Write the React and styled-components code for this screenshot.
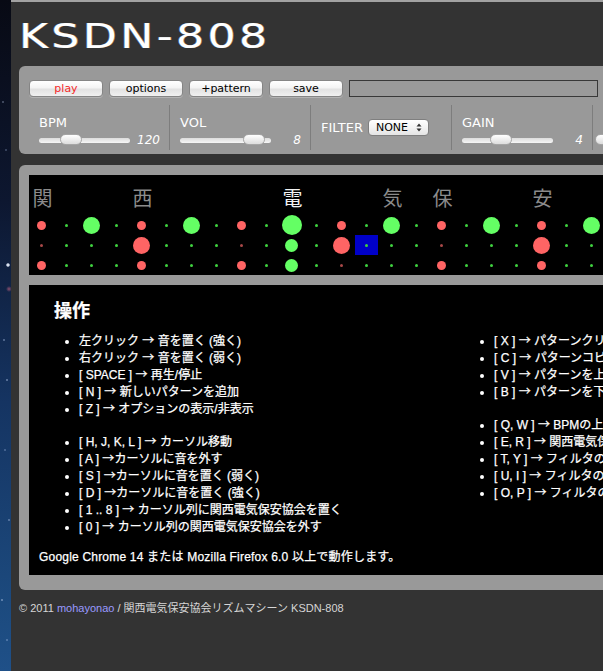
import React from 'react';
import styled, { createGlobalStyle } from 'styled-components';

const GlobalStyle = createGlobalStyle`
  html, body {
    margin: 0;
    padding: 0;
    background: #333;
    overflow: hidden;
  }
  body {
    width: 603px;
    height: 671px;
  }
`;

const Screen = styled.div`
  display: flex;
  width: 603px;
  height: 671px;
  overflow: hidden;
`;

// desktop wallpaper peeking out on the left of the browser window
const Desktop = styled.div`
  flex: 0 0 11px;
  background:
    radial-gradient(circle at 8px 265px, #e8eef8 0, #cfd8e8 1.2px, transparent 2.2px),
    radial-gradient(circle at 9px 289px, rgba(170, 90, 120, 0.8) 0, transparent 3px),
    radial-gradient(circle at 3px 102px, #8894b0 0, transparent 1.2px),
    radial-gradient(circle at 6px 150px, #6f7ea0 0, transparent 1.2px),
    radial-gradient(circle at 4px 340px, #8fa6cc 0, transparent 1.3px),
    radial-gradient(circle at 7px 380px, #a0b4d8 0, transparent 1.3px),
    radial-gradient(circle at 5px 450px, #7f98c4 0, transparent 1.2px),
    radial-gradient(circle at 9px 520px, #9cb2d8 0, transparent 1.2px),
    radial-gradient(circle at 2px 600px, #a6bde0 0, transparent 1.3px),
    radial-gradient(circle at 7px 640px, #8ca8d4 0, transparent 1.2px),
    linear-gradient(180deg, #080a14 0%, #0d1730 30%, #153462 60%, #1c4a7e 90%, #1f5088 100%);
`;

const Window = styled.div`
  flex: 1;
  min-width: 0;
  background: #333;
  border-top: 2px solid #a2a2a2;
  overflow: hidden;
`;

const Page = styled.div`
  width: 960px;
  padding-left: 8px;
`;

const Title = styled.h1`
  margin: 14px 0 10px;
  height: 40px;
  font-family: "DejaVu Sans", sans-serif;
  font-size: 34px;
  font-weight: normal;
  line-height: 40px;
  color: #fff;

  span {
    display: inline-block;
    letter-spacing: 2.6px;
    transform: scaleX(1.3);
    transform-origin: left center;
    text-shadow: -0.6px 0 rgba(120, 180, 255, 0.55), 0.6px 0 rgba(255, 190, 110, 0.55);
  }
`;

const Panel = styled.div`
  background: #999;
  border-radius: 6px;
  padding: ${p => p.$pad};
  margin-top: ${p => p.$gap || 0}px;
`;

const ButtonRow = styled.div`
  display: flex;
  align-items: center;
  gap: 6px;
`;

const Button = styled.button`
  width: 74px;
  height: 17px;
  padding: 0;
  border: 1px solid #858585;
  border-radius: 4px;
  background: linear-gradient(180deg, #ffffff 0%, #f4f4f4 45%, #e2e2e2 55%, #f0f0f0 100%);
  box-shadow: 0 1px 0 rgba(255, 255, 255, 0.25);
  font-family: "DejaVu Sans", sans-serif;
  font-size: 11px;
  line-height: 15px;
  color: ${p => (p.$accent ? '#f52a2a' : '#000')};
`;

const PatternField = styled.div`
  width: 249px;
  height: 17px;
  box-sizing: border-box;
  border: 1px solid #383838;
  background: #9a9a9a;
`;

const SectionRow = styled.div`
  display: flex;
  margin-top: 8px;
  height: 45px;
`;

const Section = styled.div`
  box-sizing: border-box;
  width: 140px;
  padding: 10px 9px 0 10px;
  font-family: "DejaVu Sans", sans-serif;
  color: #fff;

  & + & {
    width: 141px;
    border-left: 1px solid #7d7d7d;
  }
`;

const InlineSection = styled(Section)`
  display: flex;
  align-items: center;
  padding-top: 0;
`;

const Label = styled.div`
  font-size: 13px;
  line-height: 15px;
  height: 15px;
`;

const InlineLabel = styled(Label)`
  margin-right: 5px;
`;

const SliderRow = styled.div`
  display: flex;
  align-items: center;
  height: 16px;
  margin-top: 2px;
`;

const Track = styled.div`
  position: relative;
  flex: 0 0 91px;
  height: 5px;
  border-radius: 3px;
  background: linear-gradient(180deg, #dcdcdc, #f6f6f6);
`;

const Knob = styled.div`
  position: absolute;
  top: -4px;
  width: 22px;
  height: 11px;
  box-sizing: border-box;
  border: 1px solid #a6a6a6;
  border-radius: 6px;
  background: linear-gradient(180deg, #ffffff 0%, #eeeeee 50%, #dddddd 100%);
`;

const Value = styled.div`
  flex: 1;
  text-align: right;
  font-size: 12px;
  font-style: italic;
  line-height: 16px;
`;

const Select = styled.div`
  display: flex;
  align-items: center;
  width: 61px;
  height: 17px;
  box-sizing: border-box;
  padding: 0 6px 0 7px;
  border: 1px solid #7f7f7f;
  border-radius: 4px;
  background: linear-gradient(180deg, #ffffff 0%, #f3f3f3 50%, #e4e4e4 100%);
  color: #000;
  font-size: 11px;

  span { flex: 1; }
`;

const SelectArrows = () => (
  <svg width="6" height="9" viewBox="0 0 6 9">
    <path d="M3 0.5 L5.5 3.5 H0.5 Z M3 8.5 L5.5 5.5 H0.5 Z" fill="#333" />
  </svg>
);

const Slider = ({ label, value, knob }) => (
  <Section>
    <Label>{label}</Label>
    <SliderRow>
      <Track>
        <Knob style={{ left: knob }} />
      </Track>
      <Value>{value}</Value>
    </SliderRow>
  </Section>
);

const Sequencer = styled.div`
  background: #000;
  height: 100px;
  box-sizing: border-box;
  padding-top: 12px;
`;

const CharRow = styled.div`
  display: flex;
  height: 20px;
  margin-bottom: 8px;
`;

const Char = styled.div`
  flex: 0 0 25px;
  padding-left: 2px;
  box-sizing: border-box;
  text-align: center;
  font-family: "Noto Sans CJK JP", sans-serif;
  font-size: 20px;
  line-height: 21px;
  color: ${p => (p.$lit ? '#f2f2f2' : '#8b8b8b')};
`;

const DotRow = styled.div`
  display: flex;
  height: 20px;
`;

const Cell = styled.div`
  position: relative;
  flex: 0 0 25px;
  display: flex;
  align-items: center;
  justify-content: center;
`;

const Cursor = styled.div`
  position: absolute;
  left: 1px;
  top: 0;
  width: 23px;
  height: 20px;
  background: #0000c8;
`;

const Dot = styled.span`
  position: relative;
  width: ${p => p.$size}px;
  height: ${p => p.$size}px;
  border-radius: 50%;
  background: ${p => p.$color};
`;

const RED = '#ff6464';
const GREEN = '#64ff64';

const DOTS = {
  s: { size: 3, color: '#3fd23f' },
  r: { size: 3, color: '#a84848' },
  R: { size: 9, color: RED },
  B: { size: 17, color: RED },
  G: { size: 17, color: GREEN },
  g: { size: 13, color: GREEN },
  H: { size: 20, color: GREEN },
};

const ROWS = [
  'RsGsRsGsRsHsRsGsRsGsRsG',
  'rsssBsssrsgsBsssrsssBss',
  'RsssRsssRsgsrsssRsssRss',
];

const CHARS = { 0: '関', 4: '西', 10: '電', 14: '気', 16: '保', 20: '安' };

const CURSOR = { row: 1, col: 13 };

const Manual = styled.div`
  background: #000;
  box-sizing: border-box;
  height: 290px;
  margin-top: 10px;
  padding: 12px 10px 0;
  color: #fff;
  font-family: "Liberation Sans", "Noto Sans CJK JP", sans-serif;
  font-size: 12px;
  line-height: 17px;
  -webkit-text-stroke: 0.25px #fff;
`;

const Heading = styled.h2`
  margin: 0 0 12px 15px;
  font-family: "Noto Sans CJK JP", sans-serif;
  font-size: 18px;
  font-weight: bold;
  line-height: 24px;
`;

const Columns = styled.div`
  display: grid;
  grid-template-columns: 415px 415px;
`;

const KeyList = styled.ul`
  margin: 0;
  padding-left: 40px;

  & + & { margin-top: 16px; }

  li {
    height: 17px;
    white-space: nowrap;
  }
`;

const Arrow = styled.span`
  font-family: "Noto Sans CJK JP", sans-serif;
  line-height: 0;
`;

const Note = styled.p`
  margin: 13px 0 0;
  letter-spacing: 0.2px;
`;

const Footer = styled.div`
  margin-top: 11px;
  font-family: "Liberation Sans", "Noto Sans CJK JP", sans-serif;
  font-size: 11px;
  line-height: 15px;
  color: #d6d6d6;

  a {
    color: #9a9aff;
    text-decoration: none;
  }
`;

const LEFT = [
  ['左クリック → 音を置く (強く)', '右クリック → 音を置く (弱く)', '[ SPACE ] → 再生/停止', '[ N ] → 新しいパターンを追加', '[ Z ] → オプションの表示/非表示'],
  ['[ H, J, K, L ] → カーソル移動', '[ A ] →カーソルに音を外す', '[ S ] →カーソルに音を置く (弱く)', '[ D ] →カーソルに音を置く (強く)', '[ 1 .. 8 ] → カーソル列に関西電気保安協会を置く', '[ 0 ] → カーソル列の関西電気保安協会を外す'],
];

const RIGHT = [
  ['[ X ] → パターンクリア', '[ C ] → パターンコピー', '[ V ] → パターンを上へ', '[ B ] → パターンを下へ'],
  ['[ Q, W ] → BPMの上げ下げ', '[ E, R ] → 関西電気保安協会の音量', '[ T, Y ] → フィルタの種類', '[ U, I ] → フィルタの周波数', '[ O, P ] → フィルタのQ'],
];

const KeyText = ({ text }) => {
  const [key, action] = text.split('→');
  return <li>{key}<Arrow>→</Arrow>{action}</li>;
};

const Column = ({ groups }) => (
  <div>
    {groups.map((items, i) => (
      <KeyList key={i}>
        {items.map(t => <KeyText key={t} text={t} />)}
      </KeyList>
    ))}
  </div>
);

export default function App() {
  return (
    <Screen>
      <GlobalStyle />
      <Desktop />
      <Window>
        <Page>
          <Title><span>KSDN-808</span></Title>

          <Panel $pad="14px 10px 4px">
            <ButtonRow>
              <Button $accent>play</Button>
              <Button>options</Button>
              <Button>+pattern</Button>
              <Button>save</Button>
              <PatternField />
            </ButtonRow>
            <SectionRow>
              <Slider label="BPM" value="120" knob={21} />
              <Slider label="VOL" value="8" knob={63} />
              <InlineSection>
                <InlineLabel>FILTER</InlineLabel>
                <Select><span>NONE</span><SelectArrows /></Select>
              </InlineSection>
              <Slider label="GAIN" value="4" knob={28} />
              <Slider label="" value="" knob={-8} />
            </SectionRow>
          </Panel>

          <Panel $pad="10px 10px 15px" $gap={11}>
            <Sequencer>
              <CharRow>
                {ROWS[0].split('').map((_, c) => (
                  <Char key={c} $lit={c === 10}>{CHARS[c] || ''}</Char>
                ))}
              </CharRow>
              {ROWS.map((row, r) => (
                <DotRow key={r}>
                  {row.split('').map((k, c) => (
                    <Cell key={c}>
                      {CURSOR.row === r && CURSOR.col === c && <Cursor />}
                      <Dot $size={DOTS[k].size} $color={DOTS[k].color} />
                    </Cell>
                  ))}
                </DotRow>
              ))}
            </Sequencer>

            <Manual>
              <Heading>操作</Heading>
              <Columns>
                <Column groups={LEFT} />
                <Column groups={RIGHT} />
              </Columns>
              <Note>Google Chrome 14 または Mozilla Firefox 6.0 以上で動作します。</Note>
            </Manual>
          </Panel>

          <Footer>
            © 2011 <a href="#">mohayonao</a> / 関西電気保安協会リズムマシーン KSDN-808
          </Footer>
        </Page>
      </Window>
    </Screen>
  );
}
